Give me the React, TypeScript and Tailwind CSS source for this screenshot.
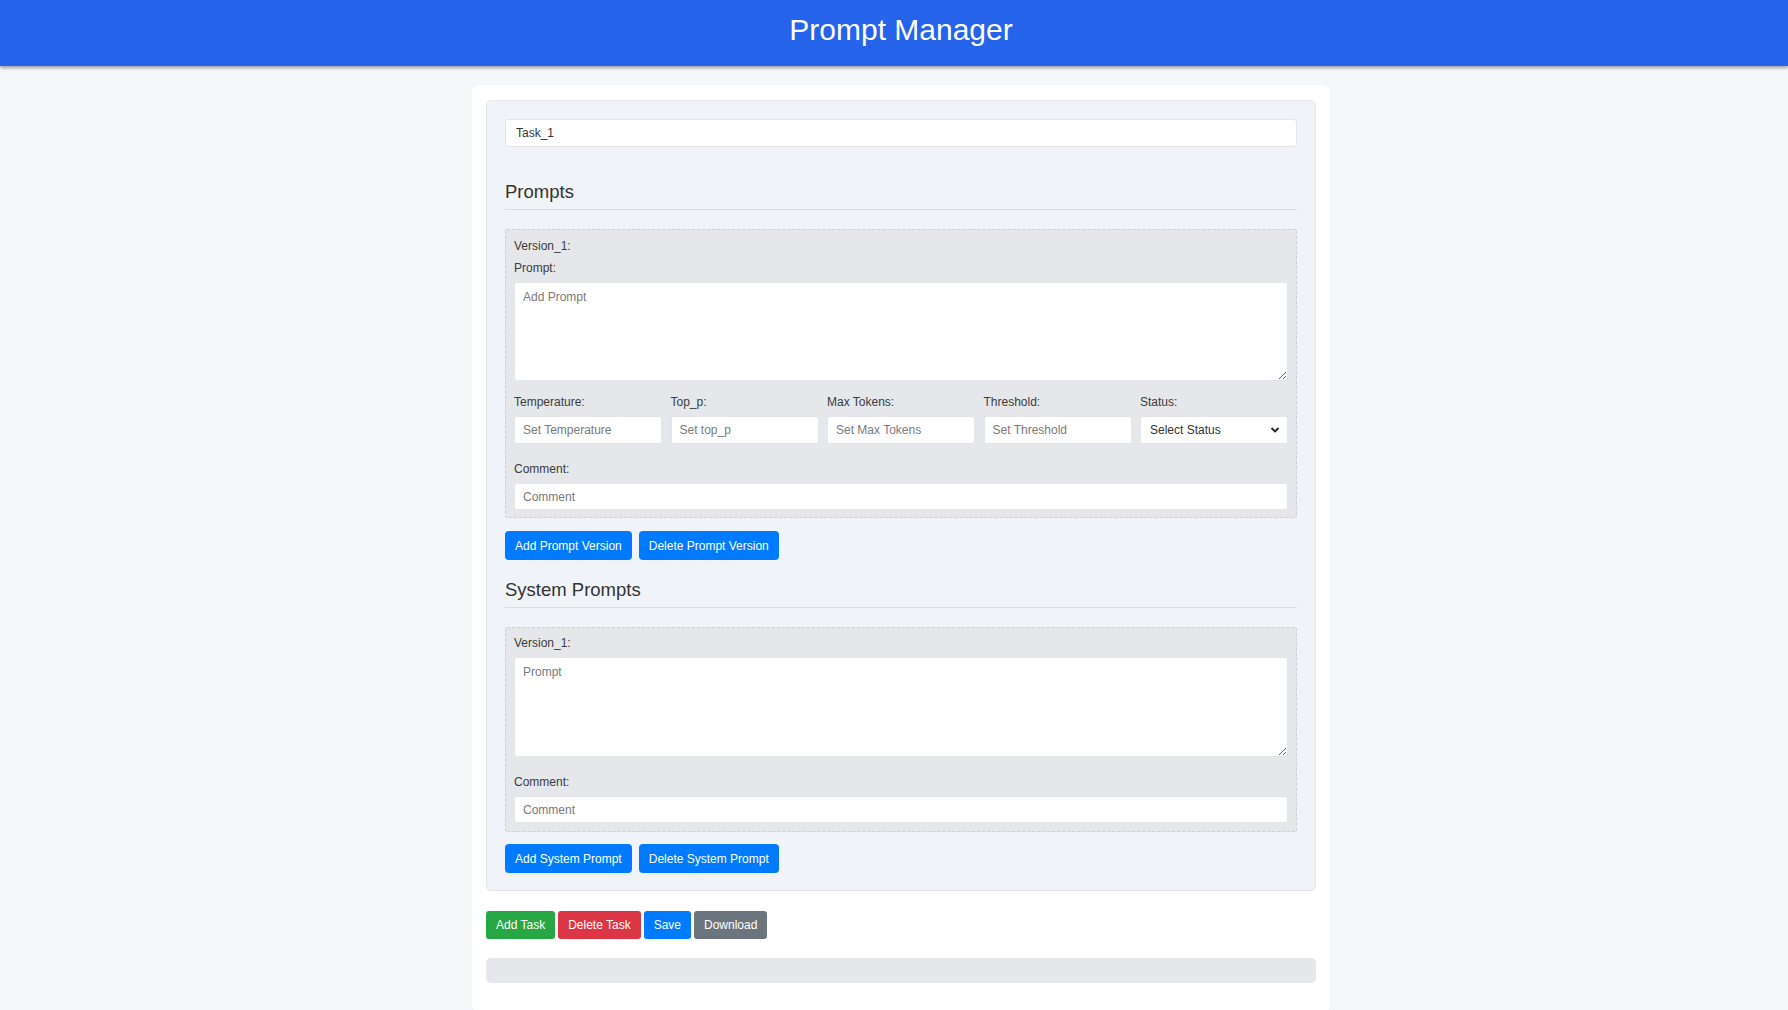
import React from "react";

const font = { fontFamily: '"Liberation Sans", Arial, sans-serif' };

function Label({ children }: { children: React.ReactNode }) {
  return <div className="text-[12px] leading-[16px] text-[#3b3b3b] mb-[6px]">{children}</div>;
}

function Btn({ children, color }: { children: React.ReactNode; color: string }) {
  return (
    <button
      className={`h-[29px] px-[10px] rounded-[4px] text-white text-[12px] ${color}`}
      style={font}
    >
      {children}
    </button>
  );
}

function SmallBtn({ children, color }: { children: React.ReactNode; color: string }) {
  return (
    <button
      className={`h-[28px] px-[10px] rounded-[3px] text-white text-[12px] ${color}`}
      style={font}
    >
      {children}
    </button>
  );
}

const inputCls =
  "w-full bg-white rounded-[3px] border border-[#e3e5e8] px-[8px] text-[12px] text-[#333] placeholder:text-[#7a7a7a] outline-none";

export default function App() {
  return (
    <div className="min-h-screen bg-[#f5f6f9]" style={font}>
      <header className="h-[66px] bg-[#2563eb] shadow-[0_2px_3px_rgba(0,0,0,0.35)] flex items-center justify-center pl-[14px] pb-[6px]">
        <h1 className="text-white text-[30px] leading-[36px] font-normal">Prompt Manager</h1>
      </header>
      <div className="pl-[14px] pt-[19px]">
        <div className="w-[858px] mx-auto bg-white rounded-[8px] px-[14px] pt-[15px] pb-[30px]">
          <div className="bg-[#f0f3f8] border border-[#e5e8ee] rounded-[5px] px-[18px] pt-[18px] pb-[17px]">
            <input className={`${inputCls} h-[28px] border-[#d6d9de] px-[10px]`} defaultValue="Task_1" />

            <h2 className="mt-[33px] text-[18.5px] leading-[24px] text-[#333] pb-[5px] border-b border-[#d9dce1]">Prompts</h2>

            <div className="mt-[19px] bg-[#e5e7eb] border border-dashed border-[#cdd1d7] rounded-[2px] px-[8px] pt-[8px] pb-[7px]">
              <Label>Version_1:</Label>
              <Label>Prompt:</Label>
              <textarea
                className={`${inputCls} h-[99px] block pt-[5px] px-[8px] resize-y`}
                placeholder="Add Prompt"
              />
              <div className="mt-[13px] grid grid-cols-5 gap-x-[8.5px]">
                <div>
                  <Label>Temperature:</Label>
                  <input className={`${inputCls} h-[28px]`} placeholder="Set Temperature" />
                </div>
                <div>
                  <Label>Top_p:</Label>
                  <input className={`${inputCls} h-[28px]`} placeholder="Set top_p" />
                </div>
                <div>
                  <Label>Max Tokens:</Label>
                  <input className={`${inputCls} h-[28px]`} placeholder="Set Max Tokens" />
                </div>
                <div>
                  <Label>Threshold:</Label>
                  <input className={`${inputCls} h-[28px]`} placeholder="Set Threshold" />
                </div>
                <div>
                  <Label>Status:</Label>
                  <div className="relative">
                    <select
                      className={`${inputCls} h-[28px] appearance-none text-[#4a4a4a] pl-[9px]`}
                      defaultValue=""
                      style={font}
                    >
                      <option value="">Select Status</option>
                      <option value="active">Active</option>
                    </select>
                    <svg
                      className="absolute right-[8px] top-[10px] pointer-events-none"
                      width="10"
                      height="8"
                      viewBox="0 0 10 8"
                    >
                      <path d="M1.5 2 L5 5.5 L8.5 2" fill="none" stroke="#222" strokeWidth="1.8" />
                    </svg>
                  </div>
                </div>
              </div>
              <div className="mt-[17px]">
                <Label>Comment:</Label>
                <input className={`${inputCls} h-[27px]`} placeholder="Comment" />
              </div>
            </div>

            <div className="mt-[13px] flex gap-[7px]">
              <Btn color="bg-[#007bff]">Add Prompt Version</Btn>
              <Btn color="bg-[#007bff]">Delete Prompt Version</Btn>
            </div>

            <h2 className="mt-[18px] text-[18.5px] leading-[24px] text-[#333] pb-[5px] border-b border-[#d9dce1]">System Prompts</h2>

            <div className="mt-[19px] bg-[#e5e7eb] border border-dashed border-[#cdd1d7] rounded-[2px] px-[8px] pt-[7px] pb-[8px]">
              <Label>Version_1:</Label>
              <textarea
                className={`${inputCls} h-[100px] block pt-[5px] px-[8px] resize-y`}
                placeholder="Prompt"
              />
              <div className="mt-[17px]">
                <Label>Comment:</Label>
                <input className={`${inputCls} h-[27px]`} placeholder="Comment" />
              </div>
            </div>

            <div className="mt-[12px] flex gap-[7px]">
              <Btn color="bg-[#007bff]">Add System Prompt</Btn>
              <Btn color="bg-[#007bff]">Delete System Prompt</Btn>
            </div>
          </div>

          <div className="mt-[20px] flex gap-[3px]">
            <SmallBtn color="bg-[#28a745]">Add Task</SmallBtn>
            <SmallBtn color="bg-[#dc3545]">Delete Task</SmallBtn>
            <SmallBtn color="bg-[#007bff]">Save</SmallBtn>
            <SmallBtn color="bg-[#6c757d]">Download</SmallBtn>
          </div>

          <div className="mt-[19px] h-[25px] rounded-[5px] bg-[#e5e7eb]" />
        </div>
      </div>
    </div>
  );
}
